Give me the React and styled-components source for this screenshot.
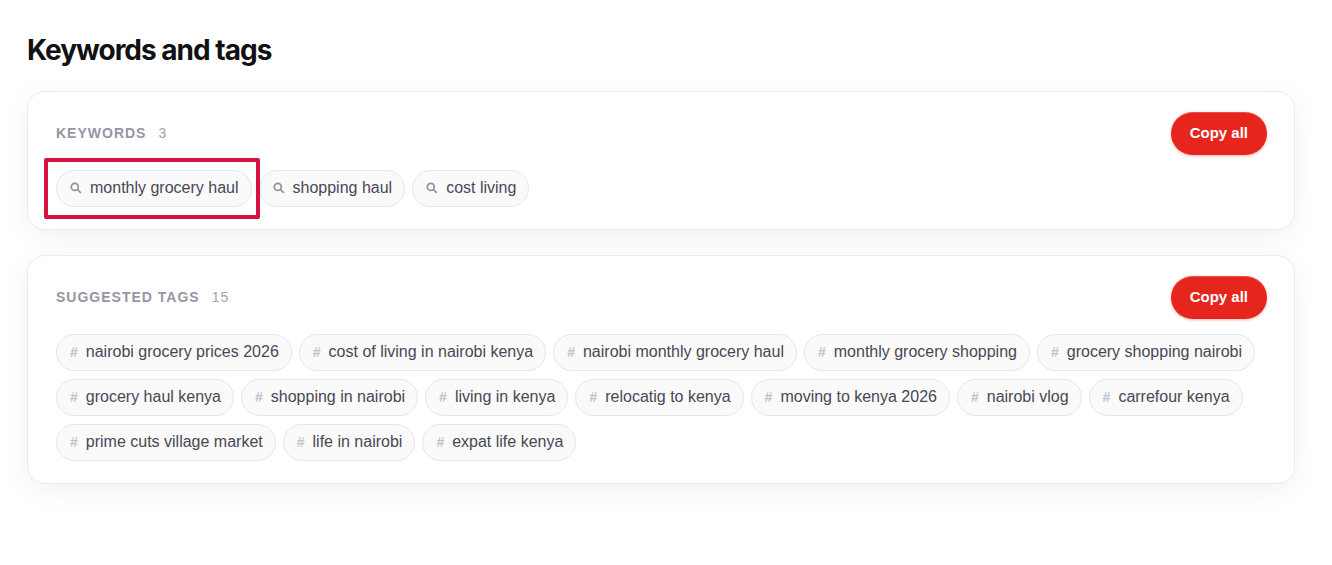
import React from "react";
import styled, { createGlobalStyle } from "styled-components";

const keywords = ["monthly grocery haul", "shopping haul", "cost living"];

const tags = [
  "nairobi grocery prices 2026",
  "cost of living in nairobi kenya",
  "nairobi monthly grocery haul",
  "monthly grocery shopping",
  "grocery shopping nairobi",
  "grocery haul kenya",
  "shopping in nairobi",
  "living in kenya",
  "relocatig to kenya",
  "moving to kenya 2026",
  "nairobi vlog",
  "carrefour kenya",
  "prime cuts village market",
  "life in nairobi",
  "expat life kenya",
];

const SearchIcon = () => (
  <Icon viewBox="0 0 12 12" aria-hidden="true">
    <circle cx="4.8" cy="4.9" r="3.5" />
    <path d="M7.3 7.4L10.9 11" />
  </Icon>
);

const Panel = ({ title, items, icon, highlighted }) => {
  const copyAll = () => {
    navigator.clipboard?.writeText(items.join(", "));
  };

  return (
    <Card>
      <CardHeader>
        <CardTitle>
          {title} <Count>{items.length}</Count>
        </CardTitle>
        <CopyButton type="button" onClick={copyAll}>
          Copy all
        </CopyButton>
      </CardHeader>
      <ChipList>
        {items.map((item) => (
          <Chip key={item}>
            {icon}
            {item}
            {item === highlighted && <Highlight />}
          </Chip>
        ))}
      </ChipList>
    </Card>
  );
};

const App = () => {
  return (
    <Page>
      <GlobalStyle />
      <Heading>Keywords and tags</Heading>
      <Panel
        title="Keywords"
        items={keywords}
        icon={<SearchIcon />}
        highlighted="monthly grocery haul"
      />
      <Panel title="Suggested tags" items={tags} icon={<Hash>#</Hash>} />
    </Page>
  );
};

export default App;

const GlobalStyle = createGlobalStyle`
  * {
    box-sizing: border-box;
  }

  body {
    margin: 0;
    background: #ffffff;
    font-family: "Liberation Sans", Arial, sans-serif;
  }
`;

const Page = styled.main`
  display: flex;
  flex-direction: column;
  gap: 25px;
  padding: 34px 37px 40px 27px;
`;

const Heading = styled.h1`
  margin: 0;
  font-family: "Inter", "Liberation Sans", sans-serif;
  font-size: 28px;
  line-height: 32px;
  font-weight: 700;
  letter-spacing: -1px;
  color: #111114;
`;

const Card = styled.section`
  padding: 20px 27px 22px 28px;
  background: #ffffff;
  border: 1px solid #ebebed;
  border-radius: 18px;
  box-shadow: 0 6px 28px rgba(15, 15, 20, 0.06);
`;

const CardHeader = styled.div`
  display: flex;
  justify-content: space-between;
  align-items: center;
  margin-bottom: 15px;
`;

const CardTitle = styled.h2`
  display: flex;
  gap: 12px;
  margin: 0;
  padding-bottom: 2px;
  font-size: 14px;
  line-height: 20px;
  font-weight: 700;
  letter-spacing: 1px;
  text-transform: uppercase;
  color: #9696a4;
`;

const Count = styled.span`
  font-weight: 400;
  color: #a3a3a6;
`;

const CopyButton = styled.button`
  height: 43px;
  padding: 0 19px 2px;
  border: none;
  border-radius: 22px;
  background: #e6251c;
  color: #ffffff;
  font-family: inherit;
  font-size: 15px;
  font-weight: 700;
  cursor: pointer;
  box-shadow:
    0 1px 3px rgba(230, 37, 28, 0.35),
    inset 0 1px 0 rgba(255, 255, 255, 0.2);
`;

const ChipList = styled.ul`
  display: flex;
  flex-wrap: wrap;
  gap: 8px 7px;
  margin: 0;
  padding: 0;
  list-style: none;
`;

const Chip = styled.li`
  position: relative;
  display: flex;
  align-items: center;
  gap: 8px;
  height: 37px;
  padding: 0 12px 1px 13px;
  border: 1px solid #e5e5ec;
  border-radius: 19px;
  background: #fafafa;
  color: #484855;
  font-size: 16px;
  white-space: nowrap;
`;

const Hash = styled.span`
  color: #c3c3cf;
  font-size: 14px;
  font-weight: 700;
`;

const Icon = styled.svg`
  width: 12px;
  height: 12px;
  fill: none;
  stroke: #929298;
  stroke-width: 1.7;
`;

const Highlight = styled.span`
  position: absolute;
  z-index: 1;
  inset: -13px -9px -13px -13px;
  border: 4px solid #d4113f;
  border-radius: 2px;
  pointer-events: none;
`;
